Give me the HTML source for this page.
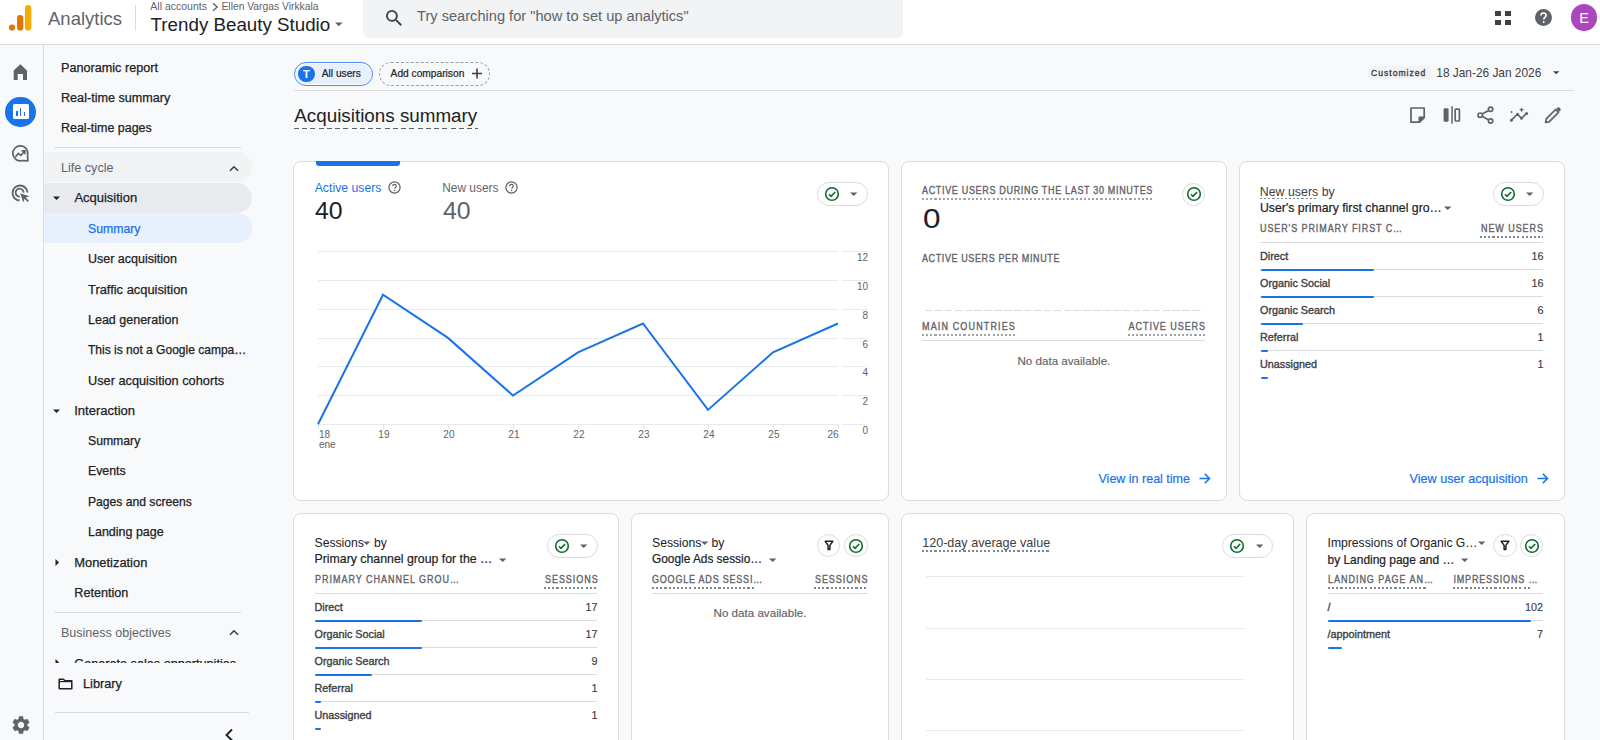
<!DOCTYPE html>
<html><head><meta charset="utf-8"><style>
html,body{margin:0;padding:0;width:1600px;height:740px;overflow:hidden;background:#f8f9fa}
body{position:relative;font-family:"Liberation Sans",sans-serif}
.t{position:absolute;white-space:nowrap;line-height:1}
svg{display:block}
</style></head><body>
<div style="position:absolute;left:0px;top:0px;width:1600px;height:740px;background:#f8f9fa"></div>
<div style="position:absolute;left:0px;top:0px;width:1600px;height:44px;background:#fff"></div>
<div style="position:absolute;left:0px;top:44px;width:1600px;height:1px;background:#dadce0"></div>
<div style="position:absolute;left:43px;top:45px;width:1px;height:695px;background:#dadce0"></div>
<svg style="position:absolute;left:8px;top:4px;" width="26" height="28" viewBox="0 0 26 28"><circle cx="4" cy="23.5" r="3.1" fill="#e37400"/><rect x="9" y="11" width="6.3" height="15.6" rx="3.15" fill="#e37400"/><rect x="17" y="1" width="6.3" height="25.6" rx="3.15" fill="#f9ab00"/></svg>
<div class="t" style="top:10.00px;font-size:18.5px;color:#5f6368;left:48.00px;">Analytics</div>
<div style="position:absolute;left:135px;top:5px;width:1px;height:26px;background:#dadce0"></div>
<div class="t" style="top:1.00px;font-size:10.5px;color:#5f6368;left:150.30px;">All accounts</div>
<svg style="position:absolute;left:211px;top:2px;" width="8" height="10" viewBox="0 0 8 10"><path d="M2 1.2 L6.2 5 L2 8.8" stroke="#5f6368" stroke-width="1.4" fill="none"/></svg>
<div class="t" style="top:2.00px;font-size:10.3px;color:#5f6368;left:221.50px;">Ellen Vargas Virkkala</div>
<div class="t" style="top:16.00px;font-size:18.76px;color:#202124;left:150.60px;">Trendy Beauty Studio</div>
<svg style="position:absolute;left:335px;top:22px;" width="8" height="5" viewBox="0 0 8 5"><path d="M0 0.5 L7.6 0.5 L3.8 4.3Z" fill="#5f6368"/></svg>
<div style="position:absolute;left:363px;top:-10px;width:540px;height:47.5px;background:#f1f3f4;border-radius:6px"></div>
<svg style="position:absolute;left:385.7px;top:10px;" width="16.8" height="16.8" viewBox="3 3 18.5 18.5"><path d="M15.5 14h-.79l-.28-.27A6.47 6.47 0 0 0 16 9.5 6.5 6.5 0 1 0 9.5 16c1.61 0 3.09-.59 4.23-1.57l.27.28v.79l5 4.99L20.49 19l-4.99-5zm-6 0C7.01 14 5 11.99 5 9.5S7.01 5 9.5 5 14 7.01 14 9.5 11.99 14 9.5 14z" fill="#3c4043"/></svg>
<div class="t" style="top:9.00px;font-size:14.63px;color:#5f6368;left:417.00px;">Try searching for "how to set up analytics"</div>
<div style="position:absolute;left:1495.2px;top:10.5px;width:5.6px;height:5.3px;background:#3c4043"></div>
<div style="position:absolute;left:1505px;top:10.5px;width:5.6px;height:5.3px;background:#3c4043"></div>
<div style="position:absolute;left:1495.2px;top:19.9px;width:5.6px;height:5.3px;background:#3c4043"></div>
<div style="position:absolute;left:1505px;top:19.9px;width:5.6px;height:5.3px;background:#3c4043"></div>
<svg style="position:absolute;left:1535px;top:9px;" width="17" height="17" viewBox="0 0 17 17"><circle cx="8.5" cy="8.5" r="8.5" fill="#5f6368"/><path d="M5.9 6.6a2.6 2.6 0 0 1 5.2 0c0 1.7-2.4 1.9-2.4 3.9" stroke="#fff" stroke-width="1.6" fill="none"/><circle cx="8.7" cy="13.1" r="1" fill="#fff"/></svg>
<div style="position:absolute;left:1570.7px;top:4.3px;width:26.6px;height:26.6px;background:#ab47bc;border-radius:50%"></div>
<div class="t" style="top:11.00px;font-size:14.5px;color:#fff;left:1384.00px;width:400px;text-align:center;">E</div>
<svg style="position:absolute;left:12px;top:63px;" width="17" height="18" viewBox="0 0 17 18"><path d="M1.7 16.9V7.6L8.3 1.3 15 7.6V16.9H11V11H5.7V16.9Z" fill="#5f6368"/></svg>
<div style="position:absolute;left:5.2px;top:96.9px;width:30.4px;height:30.4px;background:#1a73e8;border-radius:50%"></div>
<div style="position:absolute;left:13px;top:104.2px;width:15.7px;height:15.3px;background:#fff;border-radius:1.5px"></div>
<div style="position:absolute;left:16.3px;top:110.5px;width:1.6px;height:5.5px;background:#1a73e8"></div>
<div style="position:absolute;left:19.9px;top:107.8px;width:1.6px;height:8.2px;background:#1a73e8"></div>
<div style="position:absolute;left:23.5px;top:112.3px;width:1.6px;height:3.7px;background:#1a73e8"></div>
<svg style="position:absolute;left:11px;top:143.5px;" width="20" height="20" viewBox="0 0 20 20"><path d="M16.54 11.24A7.5 7.5 0 1 0 11.24 16.54L16.9 16.9Z" stroke="#5f6368" stroke-width="1.7" fill="none" stroke-linejoin="round"/><path d="M4.2 13.2 L7.3 9.4 L9.9 11.4 L13.6 7.2" stroke="#5f6368" stroke-width="1.6" fill="none"/><path d="M10.6 6.9h3.3v3.3" stroke="#5f6368" stroke-width="1.6" fill="none"/></svg>
<svg style="position:absolute;left:11px;top:184px;" width="19" height="19" viewBox="0 0 19 19"><path d="M16.5 8.5A7.5 7.5 0 1 0 8.5 16.5" stroke="#5f6368" stroke-width="1.8" fill="none"/><path d="M12.6 8.8A4 4 0 1 0 8.8 12.6" stroke="#5f6368" stroke-width="1.8" fill="none"/><path d="M9.2 9.2 L18.5 12.3 L14.7 13.6 L17.9 16.8 L16.8 17.9 L13.6 14.7 L12.3 18.5Z" fill="#5f6368"/></svg>
<svg style="position:absolute;left:11.5px;top:716px;" width="18" height="18" viewBox="2 2 20 20"><path d="M19.14 12.94c.04-.3.06-.61.06-.94 0-.32-.02-.64-.07-.94l2.03-1.58a.49.49 0 0 0 .12-.61l-1.92-3.32a.488.488 0 0 0-.59-.22l-2.39.96c-.5-.38-1.03-.7-1.62-.94l-.36-2.54a.484.484 0 0 0-.48-.41h-3.84c-.24 0-.43.17-.47.41l-.36 2.54c-.59.24-1.13.57-1.62.94l-2.39-.96c-.22-.08-.47 0-.59.22L2.74 8.87c-.12.21-.08.47.12.61l2.03 1.58c-.05.3-.09.63-.09.94s.02.64.07.94l-2.03 1.58a.49.49 0 0 0-.12.61l1.92 3.32c.12.22.37.29.59.22l2.39-.96c.5.38 1.03.7 1.62.94l.36 2.54c.05.24.24.41.48.41h3.84c.24 0 .44-.17.47-.41l.36-2.54c.59-.24 1.13-.56 1.62-.94l2.39.96c.22.08.47 0 .59-.22l1.92-3.32c.12-.22.07-.47-.12-.61l-2.01-1.58zM12 15.6c-1.98 0-3.6-1.62-3.6-3.6s1.62-3.6 3.6-3.6 3.6 1.62 3.6 3.6-1.62 3.6-3.6 3.6z" fill="#5f6368"/></svg>
<div class="t" style="top:62.00px;font-size:12.65px;color:#202124;-webkit-text-stroke:0.25px #202124;left:61.00px;">Panoramic report</div>
<div class="t" style="top:92.00px;font-size:12.61px;color:#202124;-webkit-text-stroke:0.25px #202124;left:61.00px;">Real-time summary</div>
<div class="t" style="top:122.00px;font-size:12.47px;color:#202124;-webkit-text-stroke:0.25px #202124;left:61.00px;">Real-time pages</div>
<div style="position:absolute;left:54px;top:147px;width:187px;height:1px;background:#dadce0"></div>
<div style="position:absolute;left:44px;top:152px;width:207.5px;height:30px;background:#f1f3f4;border-radius:0 15px 15px 0"></div>
<div class="t" style="top:162.00px;font-size:12.6px;color:#5f6368;left:61.00px;">Life cycle</div>
<svg style="position:absolute;left:228.8px;top:164.5px;" width="10" height="7" viewBox="0 0 10 7"><path d="M1 5.8 L5 1.8 L9 5.8" stroke="#3c4043" stroke-width="1.6" fill="none"/></svg>
<div style="position:absolute;left:44px;top:182.5px;width:207.5px;height:30.5px;background:#e8eaed;border-radius:0 15px 15px 0"></div>
<svg style="position:absolute;left:53px;top:195.5px;" width="8" height="5" viewBox="0 0 8 5"><path d="M0 0.5 L7 0.5 L3.5 4Z" fill="#202124"/></svg>
<div class="t" style="top:192.00px;font-size:12.97px;color:#202124;-webkit-text-stroke:0.25px #202124;left:74.40px;">Acquisition</div>
<div style="position:absolute;left:44px;top:213px;width:207.5px;height:30px;background:#e8f0fe;border-radius:0 15px 15px 0"></div>
<div class="t" style="top:223.00px;font-size:12.27px;color:#1a73e8;-webkit-text-stroke:0.25px #1a73e8;left:88.00px;">Summary</div>
<div class="t" style="top:253.00px;font-size:12.51px;color:#202124;-webkit-text-stroke:0.25px #202124;left:88.00px;">User acquisition</div>
<div class="t" style="top:284.00px;font-size:12.89px;color:#202124;-webkit-text-stroke:0.25px #202124;left:88.00px;">Traffic acquisition</div>
<div class="t" style="top:314.00px;font-size:12.51px;color:#202124;-webkit-text-stroke:0.25px #202124;left:88.00px;">Lead generation</div>
<div class="t" style="top:344.00px;font-size:12.03px;color:#202124;-webkit-text-stroke:0.25px #202124;left:88.00px;">This is not a Google campa…</div>
<div class="t" style="top:375.00px;font-size:12.75px;color:#202124;-webkit-text-stroke:0.25px #202124;left:88.00px;">User acquisition cohorts</div>
<svg style="position:absolute;left:53px;top:408.5px;" width="8" height="5" viewBox="0 0 8 5"><path d="M0 0.5 L7 0.5 L3.5 4Z" fill="#202124"/></svg>
<div class="t" style="top:404.00px;font-size:13.06px;color:#202124;-webkit-text-stroke:0.25px #202124;left:74.20px;">Interaction</div>
<div class="t" style="top:435.00px;font-size:12.22px;color:#202124;-webkit-text-stroke:0.25px #202124;left:88.00px;">Summary</div>
<div class="t" style="top:465.00px;font-size:12.3px;color:#202124;-webkit-text-stroke:0.25px #202124;left:88.00px;">Events</div>
<div class="t" style="top:496.00px;font-size:12.13px;color:#202124;-webkit-text-stroke:0.25px #202124;left:88.00px;">Pages and screens</div>
<div class="t" style="top:526.00px;font-size:12.49px;color:#202124;-webkit-text-stroke:0.25px #202124;left:88.00px;">Landing page</div>
<svg style="position:absolute;left:54.5px;top:559px;" width="5" height="8" viewBox="0 0 5 8"><path d="M0.5 0 L4 3.5 L0.5 7Z" fill="#202124"/></svg>
<div class="t" style="top:557.00px;font-size:12.88px;color:#202124;-webkit-text-stroke:0.25px #202124;left:74.30px;">Monetization</div>
<div class="t" style="top:587.00px;font-size:12.62px;color:#202124;-webkit-text-stroke:0.25px #202124;left:74.30px;">Retention</div>
<div style="position:absolute;left:54px;top:612px;width:187px;height:1px;background:#dadce0"></div>
<div class="t" style="top:627.00px;font-size:12.53px;color:#5f6368;left:61.00px;">Business objectives</div>
<svg style="position:absolute;left:229px;top:629px;" width="10" height="7" viewBox="0 0 10 7"><path d="M1 5.8 L5 1.8 L9 5.8" stroke="#3c4043" stroke-width="1.6" fill="none"/></svg>
<div style="position:absolute;left:0;top:0;width:260px;height:662.5px;overflow:hidden">
<svg style="position:absolute;left:54.5px;top:659px;" width="5" height="8" viewBox="0 0 5 8"><path d="M0.5 0 L4 3.5 L0.5 7Z" fill="#202124"/></svg>
<div class="t" style="top:658.00px;font-size:12.67px;color:#202124;-webkit-text-stroke:0.25px #202124;left:74.30px;">Generate sales opportunities</div>
</div>
<svg style="position:absolute;left:57.5px;top:678px;" width="15" height="12" viewBox="0 0 15 12"><path d="M1.2 1.2h4.3l1.4 1.5h6.9v8H1.2Z" stroke="#202124" stroke-width="1.5" fill="none" stroke-linejoin="round"/><path d="M1.2 3.6h12.6" stroke="#202124" stroke-width="1.2"/></svg>
<div class="t" style="top:678.00px;font-size:12.76px;color:#202124;-webkit-text-stroke:0.25px #202124;left:83.00px;">Library</div>
<div style="position:absolute;left:55px;top:712px;width:194px;height:1px;background:#dadce0"></div>
<svg style="position:absolute;left:224px;top:728px;" width="10" height="14" viewBox="0 0 10 14"><path d="M8 1.5 L2.5 7 L8 12.5" stroke="#202124" stroke-width="1.9" fill="none"/></svg>
<div style="position:absolute;left:294px;top:62px;width:78.5px;height:24px;box-sizing:border-box;background:#e8f0fe;border:1.6px solid #4a8af4;border-radius:12px;box-shadow:inset 0 0 0 1px #fff"></div>
<div style="position:absolute;left:298px;top:65.6px;width:16.8px;height:16.8px;background:#1a73e8;border-radius:50%"></div>
<div class="t" style="top:69.00px;font-size:11px;color:#fff;font-weight:700;left:106.40px;width:400px;text-align:center;">T</div>
<div class="t" style="top:69.00px;font-size:10.17px;color:#202124;-webkit-text-stroke:0.2px #202124;left:321.80px;">All users</div>
<div style="position:absolute;left:379px;top:62px;width:111px;height:24px;box-sizing:border-box;border:1px dashed #9aa0a6;border-radius:12px"></div>
<div class="t" style="top:69.00px;font-size:10.21px;color:#202124;-webkit-text-stroke:0.2px #202124;left:390.60px;">Add comparison</div>
<svg style="position:absolute;left:471px;top:67.5px;" width="12" height="11" viewBox="0 0 12 11"><path d="M6 0.5V10.5M1 5.5H11" stroke="#3c4043" stroke-width="1.6"/></svg>
<div style="position:absolute;left:294px;top:90px;width:1280px;height:1px;background:#dadce0"></div>
<div style="position:absolute;left:1368px;top:66.3px;width:62.8px;height:12.7px;background:#f1f3f4"></div>
<div class="t" style="top:68.00px;font-size:9.5px;color:#3c4043;letter-spacing:1.14px;-webkit-text-stroke:0.35px #3c4043;transform:scaleX(0.9);transform-origin:left center;left:1371.30px;">Customized</div>
<div class="t" style="top:68.00px;font-size:11.88px;color:#3c4043;left:1436.30px;">18 Jan-26 Jan 2026</div>
<svg style="position:absolute;left:1553px;top:71px;" width="7" height="4" viewBox="0 0 7 4"><path d="M0 0.2 L6.4 0.2 L3.2 3.2Z" fill="#3c4043"/></svg>
<div class="t" style="top:107.00px;font-size:18.82px;color:#202124;left:294.30px;">Acquisitions summary</div>
<div style="position:absolute;left:294px;top:127.8px;width:184px;height:1.5px;background:repeating-linear-gradient(90deg,#5f6368 0 5px,transparent 5px 8.25px)"></div>
<svg style="position:absolute;left:1409px;top:106px;" width="18" height="18" viewBox="0 0 18 18"><path d="M2 2h13.2v9.6l-4.6 4.6H2Z" stroke="#5f6368" stroke-width="1.7" fill="none" stroke-linejoin="round"/><path d="M15.2 11h-5.2v5.2Z" fill="#5f6368" stroke="#5f6368" stroke-width="1" stroke-linejoin="round"/></svg>
<svg style="position:absolute;left:1443px;top:106px;" width="18" height="18" viewBox="0 0 18 18"><rect x="0.6" y="2.2" width="5" height="13.6" rx="1.2" fill="#5f6368"/><rect x="8.3" y="0.3" width="1.5" height="17.4" fill="#5f6368"/><rect x="12.2" y="3.1" width="4.2" height="11.9" rx="0.8" stroke="#5f6368" stroke-width="1.7" fill="none"/></svg>
<svg style="position:absolute;left:1477px;top:106px;" width="18" height="18" viewBox="0 0 18 18"><circle cx="13.6" cy="3.3" r="2.2" stroke="#5f6368" stroke-width="1.7" fill="none"/><circle cx="3.2" cy="9.2" r="2.2" stroke="#5f6368" stroke-width="1.7" fill="none"/><circle cx="13.6" cy="15" r="2.2" stroke="#5f6368" stroke-width="1.7" fill="none"/><path d="M5.1 8.1 L11.7 4.4 M5.1 10.3 L11.7 13.9" stroke="#5f6368" stroke-width="1.7"/></svg>
<svg style="position:absolute;left:1510px;top:106px;" width="19" height="18" viewBox="0 0 19 18"><path d="M1.2 14.4 L7.5 8 L11.5 12.4 L16.6 7.4" stroke="#5f6368" stroke-width="1.6" fill="none" stroke-linejoin="round"/><circle cx="1.4" cy="14.3" r="1.5" fill="#5f6368"/><circle cx="7.5" cy="8" r="1.3" fill="#5f6368"/><circle cx="11.5" cy="12.4" r="1.3" fill="#5f6368"/><circle cx="16.6" cy="7.4" r="1.5" fill="#5f6368"/><path d="M11.6 1.2l.8 1.7 1.7.8-1.7.8-.8 1.7-.8-1.7-1.7-.8 1.7-.8Z" fill="#5f6368"/><path d="M1.6 4.6l.5 1 1 .5-1 .5-.5 1-.5-1-1-.5 1-.5Z" fill="#5f6368"/></svg>
<svg style="position:absolute;left:1544px;top:106px;" width="18" height="18" viewBox="0 0 18 18"><path d="M1.6 16.4 L2.2 12.9 L11.6 3.5 L14.5 6.4 L5.1 15.8Z" stroke="#5f6368" stroke-width="1.7" fill="none" stroke-linejoin="round"/><path d="M12.3 2.8 L13.5 1.6 A1.3 1.3 0 0 1 15.3 1.6 L16.4 2.7 A1.3 1.3 0 0 1 16.4 4.5 L15.2 5.7Z" fill="#5f6368"/></svg>
<div style="position:absolute;left:293px;top:161px;width:596px;height:340px;box-sizing:border-box;background:#fff;border:1px solid #dadce0;border-radius:8px"></div>
<div style="position:absolute;left:901px;top:161px;width:326px;height:340px;box-sizing:border-box;background:#fff;border:1px solid #dadce0;border-radius:8px"></div>
<div style="position:absolute;left:1239px;top:161px;width:326px;height:340px;box-sizing:border-box;background:#fff;border:1px solid #dadce0;border-radius:8px"></div>
<div style="position:absolute;left:293px;top:513px;width:326px;height:258px;box-sizing:border-box;background:#fff;border:1px solid #dadce0;border-radius:8px"></div>
<div style="position:absolute;left:631px;top:513px;width:258px;height:258px;box-sizing:border-box;background:#fff;border:1px solid #dadce0;border-radius:8px"></div>
<div style="position:absolute;left:901px;top:513px;width:393px;height:258px;box-sizing:border-box;background:#fff;border:1px solid #dadce0;border-radius:8px"></div>
<div style="position:absolute;left:1306px;top:513px;width:259px;height:258px;box-sizing:border-box;background:#fff;border:1px solid #dadce0;border-radius:8px"></div>
<div style="position:absolute;left:315.5px;top:161.4px;width:84px;height:4.3px;background:#1a73e8;border-radius:0 0 3px 3px"></div>
<div class="t" style="top:182.00px;font-size:12.27px;color:#1a73e8;left:314.70px;">Active users</div>
<svg style="position:absolute;left:387.5px;top:180.5px;" width="13" height="13" viewBox="0 0 13 13"><circle cx="6.5" cy="6.5" r="5.6" stroke="#5f6368" stroke-width="1.2" fill="none"/><path d="M4.7 5.2a1.8 1.8 0 0 1 3.6 0c0 1.2-1.6 1.3-1.6 2.6" stroke="#5f6368" stroke-width="1.2" fill="none"/><circle cx="6.6" cy="9.6" r="0.75" fill="#5f6368"/></svg>
<div class="t" style="top:183.00px;font-size:11.92px;color:#5f6368;left:442.20px;">New users</div>
<svg style="position:absolute;left:504.5px;top:180.5px;" width="13" height="13" viewBox="0 0 13 13"><circle cx="6.5" cy="6.5" r="5.6" stroke="#5f6368" stroke-width="1.2" fill="none"/><path d="M4.7 5.2a1.8 1.8 0 0 1 3.6 0c0 1.2-1.6 1.3-1.6 2.6" stroke="#5f6368" stroke-width="1.2" fill="none"/><circle cx="6.6" cy="9.6" r="0.75" fill="#5f6368"/></svg>
<div class="t" style="top:200.00px;font-size:23px;color:#202124;left:314.70px;transform:scaleX(1.08);transform-origin:left">40</div>
<div class="t" style="top:200.00px;font-size:23px;color:#5f6368;left:442.60px;transform:scaleX(1.08);transform-origin:left">40</div>
<div style="position:absolute;left:817px;top:182.0px;width:51px;height:24px;box-sizing:border-box;border:1px solid #dadce0;border-radius:12px;background:#fff"></div>
<svg style="position:absolute;left:823.8000000000001px;top:185.9px;" width="16" height="16" viewBox="0 0 16 16"><circle cx="8" cy="8" r="6.3" stroke="#0f6b2c" stroke-width="1.6" fill="none"/><path d="M4.9 8.2 L7 10.3 L11.2 6" stroke="#0f6b2c" stroke-width="1.6" fill="none"/></svg>
<svg style="position:absolute;left:850.2px;top:191.8px;" width="8" height="5" viewBox="0 0 8 5"><path d="M0 0.4 L7.4 0.4 L3.7 4Z" fill="#5f6368"/></svg>
<div style="position:absolute;left:318.4px;top:424.0px;width:520px;height:1px;background:#e8eaed"></div>
<div style="position:absolute;left:841.8px;top:424.0px;width:25.5px;height:1px;background:#e8eaed"></div>
<div class="t" style="top:426.00px;font-size:10px;color:#5f6368;right:732.00px;text-align:right;">0</div>
<div style="position:absolute;left:318.4px;top:395.0px;width:520px;height:1px;background:#e8eaed"></div>
<div style="position:absolute;left:841.8px;top:395.0px;width:25.5px;height:1px;background:#e8eaed"></div>
<div class="t" style="top:397.00px;font-size:10px;color:#5f6368;right:732.00px;text-align:right;">2</div>
<div style="position:absolute;left:318.4px;top:366.0px;width:520px;height:1px;background:#e8eaed"></div>
<div style="position:absolute;left:841.8px;top:366.0px;width:25.5px;height:1px;background:#e8eaed"></div>
<div class="t" style="top:368.00px;font-size:10px;color:#5f6368;right:732.00px;text-align:right;">4</div>
<div style="position:absolute;left:318.4px;top:337.5px;width:520px;height:1px;background:#e8eaed"></div>
<div style="position:absolute;left:841.8px;top:337.5px;width:25.5px;height:1px;background:#e8eaed"></div>
<div class="t" style="top:340.00px;font-size:10px;color:#5f6368;right:732.00px;text-align:right;">6</div>
<div style="position:absolute;left:318.4px;top:308.5px;width:520px;height:1px;background:#e8eaed"></div>
<div style="position:absolute;left:841.8px;top:308.5px;width:25.5px;height:1px;background:#e8eaed"></div>
<div class="t" style="top:311.00px;font-size:10px;color:#5f6368;right:732.00px;text-align:right;">8</div>
<div style="position:absolute;left:318.4px;top:280.0px;width:520px;height:1px;background:#e8eaed"></div>
<div style="position:absolute;left:841.8px;top:280.0px;width:25.5px;height:1px;background:#e8eaed"></div>
<div class="t" style="top:282.00px;font-size:10px;color:#5f6368;right:732.00px;text-align:right;">10</div>
<div style="position:absolute;left:318.4px;top:251.0px;width:520px;height:1px;background:#e8eaed"></div>
<div style="position:absolute;left:841.8px;top:251.0px;width:25.5px;height:1px;background:#e8eaed"></div>
<div class="t" style="top:253.00px;font-size:10px;color:#5f6368;right:732.00px;text-align:right;">12</div>
<div style="position:absolute;left:317.9px;top:424px;width:1px;height:4.6px;background:#e3e5e8"></div>
<div class="t" style="top:430.00px;font-size:10px;color:#5f6368;left:318.90px;">18</div>
<div style="position:absolute;left:382.9px;top:424px;width:1px;height:4.6px;background:#e3e5e8"></div>
<div class="t" style="top:430.00px;font-size:10px;color:#5f6368;left:183.90px;width:400px;text-align:center;">19</div>
<div style="position:absolute;left:447.9px;top:424px;width:1px;height:4.6px;background:#e3e5e8"></div>
<div class="t" style="top:430.00px;font-size:10px;color:#5f6368;left:248.90px;width:400px;text-align:center;">20</div>
<div style="position:absolute;left:512.9px;top:424px;width:1px;height:4.6px;background:#e3e5e8"></div>
<div class="t" style="top:430.00px;font-size:10px;color:#5f6368;left:313.90px;width:400px;text-align:center;">21</div>
<div style="position:absolute;left:577.9px;top:424px;width:1px;height:4.6px;background:#e3e5e8"></div>
<div class="t" style="top:430.00px;font-size:10px;color:#5f6368;left:378.90px;width:400px;text-align:center;">22</div>
<div style="position:absolute;left:642.9px;top:424px;width:1px;height:4.6px;background:#e3e5e8"></div>
<div class="t" style="top:430.00px;font-size:10px;color:#5f6368;left:443.90px;width:400px;text-align:center;">23</div>
<div style="position:absolute;left:707.9px;top:424px;width:1px;height:4.6px;background:#e3e5e8"></div>
<div class="t" style="top:430.00px;font-size:10px;color:#5f6368;left:508.90px;width:400px;text-align:center;">24</div>
<div style="position:absolute;left:772.9px;top:424px;width:1px;height:4.6px;background:#e3e5e8"></div>
<div class="t" style="top:430.00px;font-size:10px;color:#5f6368;left:573.90px;width:400px;text-align:center;">25</div>
<div style="position:absolute;left:837.9px;top:424px;width:1px;height:4.6px;background:#e3e5e8"></div>
<div class="t" style="top:430.00px;font-size:10px;color:#5f6368;right:761.40px;text-align:right;">26</div>
<div class="t" style="top:440.00px;font-size:10px;color:#5f6368;left:318.90px;">ene</div>
<svg style="position:absolute;left:318.4px;top:240px;overflow:visible" width="521" height="200" viewBox="0 0 521 200"><polyline points="0.0,184.30 65.0,54.70 130.0,97.90 195.0,155.50 260.0,112.30 325.0,83.50 390.0,169.90 455.0,112.30 520.0,83.50" stroke="#1a73e8" stroke-width="2" fill="none" stroke-linejoin="miter"/></svg>
<div class="t" style="top:186.00px;font-size:10px;color:#5f6368;letter-spacing:0.749px;-webkit-text-stroke:0.35px #5f6368;transform:scaleX(0.9);transform-origin:left center;left:922.00px;">ACTIVE USERS DURING THE LAST 30 MINUTES</div>
<div style="position:absolute;left:922px;top:198px;width:231px;height:2px;background:repeating-linear-gradient(90deg,#a0a4a8 0 2.1px,transparent 2.1px 4.15px)"></div>
<div style="position:absolute;left:1182px;top:182.5px;width:23.3px;height:23.3px;box-sizing:border-box;border:1px solid #dadce0;border-radius:50%;background:#fff"></div>
<svg style="position:absolute;left:1185.65px;top:186.15px;" width="16" height="16" viewBox="0 0 16 16"><circle cx="8" cy="8" r="6.3" stroke="#0f6b2c" stroke-width="1.6" fill="none"/><path d="M4.9 8.2 L7 10.3 L11.2 6" stroke="#0f6b2c" stroke-width="1.6" fill="none"/></svg>
<div class="t" style="top:205.00px;font-size:27.4px;color:#202124;left:923.00px;transform:scaleX(1.15);transform-origin:left">0</div>
<div class="t" style="top:254.00px;font-size:10px;color:#5f6368;letter-spacing:0.675px;-webkit-text-stroke:0.35px #5f6368;transform:scaleX(0.9);transform-origin:left center;left:922.00px;">ACTIVE USERS PER MINUTE</div>
<div style="position:absolute;left:925px;top:310px;width:278px;height:1px;background:repeating-linear-gradient(90deg,#dadce0 0 7.5px,transparent 7.5px 9.9px)"></div>
<div class="t" style="top:322.00px;font-size:10px;color:#5f6368;letter-spacing:1.27px;-webkit-text-stroke:0.35px #5f6368;transform:scaleX(0.9);transform-origin:left center;left:922.00px;">MAIN COUNTRIES</div>
<div style="position:absolute;left:922px;top:334px;width:94px;height:2px;background:repeating-linear-gradient(90deg,#a0a4a8 0 2.1px,transparent 2.1px 4.15px)"></div>
<div class="t" style="top:322.00px;font-size:10px;color:#5f6368;letter-spacing:1.054px;-webkit-text-stroke:0.35px #5f6368;transform:scaleX(0.9);transform-origin:right center;right:393.65px;text-align:right;">ACTIVE USERS</div>
<div style="position:absolute;left:1128px;top:334px;width:77px;height:2px;background:repeating-linear-gradient(90deg,#a0a4a8 0 2.1px,transparent 2.1px 4.15px)"></div>
<div style="position:absolute;left:922px;top:340px;width:283.4px;height:1px;background:#dadce0"></div>
<div class="t" style="top:355.00px;font-size:11.62px;color:#5f6368;-webkit-text-stroke:0.15px #5f6368;left:863.90px;width:400px;text-align:center;">No data available.</div>
<div class="t" style="top:473.00px;font-size:12.5px;color:#1a73e8;-webkit-text-stroke:0.2px #1a73e8;left:1098.50px;">View in real time</div>
<svg style="position:absolute;left:1199px;top:473px;" width="12" height="11" viewBox="0 0 12 11"><path d="M0.5 5.5H10.5M5.8 0.8L10.5 5.5L5.8 10.2" stroke="#1a73e8" stroke-width="1.6" fill="none"/></svg>
<div class="t" style="top:186.00px;font-size:12.38px;color:#3c4043;left:1259.80px;">New users by</div>
<div style="position:absolute;left:1260px;top:197.8px;width:58px;height:1.5px;background:repeating-linear-gradient(90deg,#80868b 0 2.1px,transparent 2.1px 4.15px)"></div>
<div class="t" style="top:202.00px;font-size:12.29px;color:#202124;-webkit-text-stroke:0.2px #202124;left:1260.00px;">User&#39;s primary first channel gro…</div>
<svg style="position:absolute;left:1444px;top:206px;" width="8" height="5" viewBox="0 0 8 5"><path d="M0 0.4 L7.4 0.4 L3.7 4Z" fill="#5f6368"/></svg>
<div style="position:absolute;left:1493px;top:182.0px;width:51px;height:24px;box-sizing:border-box;border:1px solid #dadce0;border-radius:12px;background:#fff"></div>
<svg style="position:absolute;left:1499.6px;top:186.4px;" width="16" height="16" viewBox="0 0 16 16"><circle cx="8" cy="8" r="6.3" stroke="#0f6b2c" stroke-width="1.6" fill="none"/><path d="M4.9 8.2 L7 10.3 L11.2 6" stroke="#0f6b2c" stroke-width="1.6" fill="none"/></svg>
<svg style="position:absolute;left:1526px;top:192.3px;" width="8" height="5" viewBox="0 0 8 5"><path d="M0 0.4 L7.4 0.4 L3.7 4Z" fill="#5f6368"/></svg>
<div class="t" style="top:224.00px;font-size:10px;color:#5f6368;letter-spacing:1.003px;-webkit-text-stroke:0.35px #5f6368;transform:scaleX(0.9);transform-origin:left center;left:1260.00px;">USER&#39;S PRIMARY FIRST C…</div>
<div class="t" style="top:224.00px;font-size:10px;color:#5f6368;letter-spacing:1.036px;-webkit-text-stroke:0.35px #5f6368;transform:scaleX(0.9);transform-origin:right center;right:55.67px;text-align:right;">NEW USERS</div>
<div style="position:absolute;left:1480px;top:236.1px;width:63px;height:1.5px;background:repeating-linear-gradient(90deg,#80868b 0 2.1px,transparent 2.1px 4.15px)"></div>
<div style="position:absolute;left:1260px;top:241.6px;width:283.4000000000001px;height:1px;background:#dadce0"></div>
<div class="t" style="top:251.00px;font-size:10.8px;color:#3c4043;-webkit-text-stroke:0.35px #3c4043;left:1260.00px;">Direct</div>
<div class="t" style="top:251.00px;font-size:10.8px;color:#3c4043;-webkit-text-stroke:0.15px #3c4043;right:56.60px;text-align:right;">16</div>
<div style="position:absolute;left:1260px;top:269.0px;width:283.4000000000001px;height:1px;background:#dadce0"></div>
<div style="position:absolute;left:1260.5px;top:268.7px;width:113.2px;height:2px;background:#1a73e8;border-radius:1px"></div>
<div class="t" style="top:278.00px;font-size:10.8px;color:#3c4043;-webkit-text-stroke:0.35px #3c4043;left:1260.00px;">Organic Social</div>
<div class="t" style="top:278.00px;font-size:10.8px;color:#3c4043;-webkit-text-stroke:0.15px #3c4043;right:56.60px;text-align:right;">16</div>
<div style="position:absolute;left:1260px;top:296.0px;width:283.4000000000001px;height:1px;background:#dadce0"></div>
<div style="position:absolute;left:1260.5px;top:295.7px;width:113.2px;height:2px;background:#1a73e8;border-radius:1px"></div>
<div class="t" style="top:305.00px;font-size:10.8px;color:#3c4043;-webkit-text-stroke:0.35px #3c4043;left:1260.00px;">Organic Search</div>
<div class="t" style="top:305.00px;font-size:10.8px;color:#3c4043;-webkit-text-stroke:0.15px #3c4043;right:56.60px;text-align:right;">6</div>
<div style="position:absolute;left:1260px;top:323.0px;width:283.4000000000001px;height:1px;background:#dadce0"></div>
<div style="position:absolute;left:1260.5px;top:322.7px;width:42.45px;height:2px;background:#1a73e8;border-radius:1px"></div>
<div class="t" style="top:332.00px;font-size:10.8px;color:#3c4043;-webkit-text-stroke:0.35px #3c4043;left:1260.00px;">Referral</div>
<div class="t" style="top:332.00px;font-size:10.8px;color:#3c4043;-webkit-text-stroke:0.15px #3c4043;right:56.60px;text-align:right;">1</div>
<div style="position:absolute;left:1260px;top:350.0px;width:283.4000000000001px;height:1px;background:#dadce0"></div>
<div style="position:absolute;left:1260.5px;top:349.7px;width:7.075px;height:2px;background:#1a73e8;border-radius:1px"></div>
<div class="t" style="top:359.00px;font-size:10.8px;color:#3c4043;-webkit-text-stroke:0.35px #3c4043;left:1260.00px;">Unassigned</div>
<div class="t" style="top:359.00px;font-size:10.8px;color:#3c4043;-webkit-text-stroke:0.15px #3c4043;right:56.60px;text-align:right;">1</div>
<div style="position:absolute;left:1260.5px;top:376.7px;width:7.075px;height:2px;background:#1a73e8;border-radius:1px"></div>
<div class="t" style="top:473.00px;font-size:12.64px;color:#1a73e8;-webkit-text-stroke:0.2px #1a73e8;left:1409.50px;">View user acquisition</div>
<svg style="position:absolute;left:1536.5px;top:473px;" width="12" height="11" viewBox="0 0 12 11"><path d="M0.5 5.5H10.5M5.8 0.8L10.5 5.5L5.8 10.2" stroke="#1a73e8" stroke-width="1.6" fill="none"/></svg>
<div class="t" style="top:537.00px;font-size:12.2px;color:#202124;left:314.50px;">Sessions</div>
<svg style="position:absolute;left:363.0px;top:541.1px;" width="8" height="5" viewBox="0 0 8 5"><path d="M0 0.4 L7.4 0.4 L3.7 4Z" fill="#5f6368"/></svg>
<div class="t" style="top:537.00px;font-size:12.2px;color:#202124;left:374.00px;">by</div>
<div class="t" style="top:553.00px;font-size:12.32px;color:#202124;-webkit-text-stroke:0.2px #202124;left:314.50px;">Primary channel group for the …</div>
<svg style="position:absolute;left:498.6px;top:558.0px;" width="8" height="5" viewBox="0 0 8 5"><path d="M0 0.4 L7.4 0.4 L3.7 4Z" fill="#5f6368"/></svg>
<div style="position:absolute;left:547px;top:534.0px;width:51px;height:24px;box-sizing:border-box;border:1px solid #dadce0;border-radius:12px;background:#fff"></div>
<svg style="position:absolute;left:553.6px;top:537.6px;" width="16" height="16" viewBox="0 0 16 16"><circle cx="8" cy="8" r="6.3" stroke="#0f6b2c" stroke-width="1.6" fill="none"/><path d="M4.9 8.2 L7 10.3 L11.2 6" stroke="#0f6b2c" stroke-width="1.6" fill="none"/></svg>
<svg style="position:absolute;left:580px;top:543.5px;" width="8" height="5" viewBox="0 0 8 5"><path d="M0 0.4 L7.4 0.4 L3.7 4Z" fill="#5f6368"/></svg>
<div class="t" style="top:575.00px;font-size:10px;color:#5f6368;letter-spacing:1.092px;-webkit-text-stroke:0.35px #5f6368;transform:scaleX(0.9);transform-origin:left center;left:314.50px;">PRIMARY CHANNEL GROU…</div>
<div class="t" style="top:575.00px;font-size:10px;color:#5f6368;letter-spacing:1.067px;-webkit-text-stroke:0.35px #5f6368;transform:scaleX(0.9);transform-origin:right center;right:1001.64px;text-align:right;">SESSIONS</div>
<div style="position:absolute;left:544px;top:587.3px;width:54px;height:1.5px;background:repeating-linear-gradient(90deg,#80868b 0 2.1px,transparent 2.1px 4.15px)"></div>
<div style="position:absolute;left:314.5px;top:592.8px;width:282.9px;height:1px;background:#dadce0"></div>
<div class="t" style="top:602.00px;font-size:10.8px;color:#3c4043;-webkit-text-stroke:0.35px #3c4043;left:314.50px;">Direct</div>
<div class="t" style="top:602.00px;font-size:10.8px;color:#3c4043;-webkit-text-stroke:0.15px #3c4043;right:1002.60px;text-align:right;">17</div>
<div style="position:absolute;left:314.5px;top:620.1999999999999px;width:282.9px;height:1px;background:#dadce0"></div>
<div style="position:absolute;left:315.0px;top:619.9px;width:107.28888888888889px;height:2px;background:#1a73e8;border-radius:1px"></div>
<div class="t" style="top:629.00px;font-size:10.8px;color:#3c4043;-webkit-text-stroke:0.35px #3c4043;left:314.50px;">Organic Social</div>
<div class="t" style="top:629.00px;font-size:10.8px;color:#3c4043;-webkit-text-stroke:0.15px #3c4043;right:1002.60px;text-align:right;">17</div>
<div style="position:absolute;left:314.5px;top:647.1999999999999px;width:282.9px;height:1px;background:#dadce0"></div>
<div style="position:absolute;left:315.0px;top:646.9px;width:107.28888888888889px;height:2px;background:#1a73e8;border-radius:1px"></div>
<div class="t" style="top:656.00px;font-size:10.8px;color:#3c4043;-webkit-text-stroke:0.35px #3c4043;left:314.50px;">Organic Search</div>
<div class="t" style="top:656.00px;font-size:10.8px;color:#3c4043;-webkit-text-stroke:0.15px #3c4043;right:1002.60px;text-align:right;">9</div>
<div style="position:absolute;left:314.5px;top:674.1999999999999px;width:282.9px;height:1px;background:#dadce0"></div>
<div style="position:absolute;left:315.0px;top:673.9px;width:56.8px;height:2px;background:#1a73e8;border-radius:1px"></div>
<div class="t" style="top:683.00px;font-size:10.8px;color:#3c4043;-webkit-text-stroke:0.35px #3c4043;left:314.50px;">Referral</div>
<div class="t" style="top:683.00px;font-size:10.8px;color:#3c4043;-webkit-text-stroke:0.15px #3c4043;right:1002.60px;text-align:right;">1</div>
<div style="position:absolute;left:314.5px;top:701.1999999999999px;width:282.9px;height:1px;background:#dadce0"></div>
<div style="position:absolute;left:315.0px;top:700.9px;width:6.311111111111111px;height:2px;background:#1a73e8;border-radius:1px"></div>
<div class="t" style="top:710.00px;font-size:10.8px;color:#3c4043;-webkit-text-stroke:0.35px #3c4043;left:314.50px;">Unassigned</div>
<div class="t" style="top:710.00px;font-size:10.8px;color:#3c4043;-webkit-text-stroke:0.15px #3c4043;right:1002.60px;text-align:right;">1</div>
<div style="position:absolute;left:315.0px;top:727.9px;width:6.311111111111111px;height:2px;background:#1a73e8;border-radius:1px"></div>
<div class="t" style="top:537.00px;font-size:12.2px;color:#202124;left:652.00px;">Sessions</div>
<svg style="position:absolute;left:700.5px;top:541.1px;" width="8" height="5" viewBox="0 0 8 5"><path d="M0 0.4 L7.4 0.4 L3.7 4Z" fill="#5f6368"/></svg>
<div class="t" style="top:537.00px;font-size:12.2px;color:#202124;left:711.50px;">by</div>
<div class="t" style="top:554.00px;font-size:11.87px;color:#202124;-webkit-text-stroke:0.2px #202124;left:652.00px;">Google Ads sessio…</div>
<svg style="position:absolute;left:769px;top:558.0px;" width="8" height="5" viewBox="0 0 8 5"><path d="M0 0.4 L7.4 0.4 L3.7 4Z" fill="#5f6368"/></svg>
<div style="position:absolute;left:817px;top:534px;width:23.3px;height:23.3px;box-sizing:border-box;border:1px solid #dadce0;border-radius:50%;background:#fff"></div>
<svg style="position:absolute;left:823.6px;top:540.3px;" width="10" height="11" viewBox="0 0 10 11"><path d="M1.2 1.3 H8.8 L5.9 5.4 V9.6 H4.1 V5.4Z" stroke="#202124" stroke-width="1.5" fill="none" stroke-linejoin="round"/></svg>
<div style="position:absolute;left:844.3px;top:534px;width:23.3px;height:23.3px;box-sizing:border-box;border:1px solid #dadce0;border-radius:50%;background:#fff"></div>
<svg style="position:absolute;left:847.9499999999999px;top:537.65px;" width="16" height="16" viewBox="0 0 16 16"><circle cx="8" cy="8" r="6.3" stroke="#0f6b2c" stroke-width="1.6" fill="none"/><path d="M4.9 8.2 L7 10.3 L11.2 6" stroke="#0f6b2c" stroke-width="1.6" fill="none"/></svg>
<div class="t" style="top:575.00px;font-size:10px;color:#5f6368;letter-spacing:0.88px;-webkit-text-stroke:0.35px #5f6368;transform:scaleX(0.9);transform-origin:left center;left:652.00px;">GOOGLE ADS SESSI…</div>
<div style="position:absolute;left:652px;top:587.3px;width:104px;height:1.5px;background:repeating-linear-gradient(90deg,#80868b 0 2.1px,transparent 2.1px 4.15px)"></div>
<div class="t" style="top:575.00px;font-size:10px;color:#5f6368;letter-spacing:1.039px;-webkit-text-stroke:0.35px #5f6368;transform:scaleX(0.9);transform-origin:right center;right:731.56px;text-align:right;">SESSIONS</div>
<div style="position:absolute;left:814px;top:587.3px;width:54px;height:1.5px;background:repeating-linear-gradient(90deg,#80868b 0 2.1px,transparent 2.1px 4.15px)"></div>
<div style="position:absolute;left:652px;top:592.8px;width:216px;height:1px;background:#dadce0"></div>
<div class="t" style="top:607.00px;font-size:11.62px;color:#5f6368;-webkit-text-stroke:0.15px #5f6368;left:560.00px;width:400px;text-align:center;">No data available.</div>
<div class="t" style="top:537.00px;font-size:12.58px;color:#3c4043;left:922.20px;">120-day average value</div>
<div style="position:absolute;left:922px;top:550px;width:128px;height:1.5px;background:repeating-linear-gradient(90deg,#80868b 0 2.1px,transparent 2.1px 4.15px)"></div>
<div style="position:absolute;left:1222px;top:534.0px;width:51px;height:24px;box-sizing:border-box;border:1px solid #dadce0;border-radius:12px;background:#fff"></div>
<svg style="position:absolute;left:1229.1px;top:538.1999999999999px;" width="16" height="16" viewBox="0 0 16 16"><circle cx="8" cy="8" r="6.3" stroke="#0f6b2c" stroke-width="1.6" fill="none"/><path d="M4.9 8.2 L7 10.3 L11.2 6" stroke="#0f6b2c" stroke-width="1.6" fill="none"/></svg>
<svg style="position:absolute;left:1255.5px;top:544.0999999999999px;" width="8" height="5" viewBox="0 0 8 5"><path d="M0 0.4 L7.4 0.4 L3.7 4Z" fill="#5f6368"/></svg>
<div style="position:absolute;left:925.8px;top:575.5px;width:318px;height:1px;background:#e8eaed"></div>
<div style="position:absolute;left:925.8px;top:627.5px;width:318px;height:1px;background:#e8eaed"></div>
<div style="position:absolute;left:925.8px;top:678.5px;width:318px;height:1px;background:#e8eaed"></div>
<div style="position:absolute;left:925.8px;top:729.5px;width:318px;height:1px;background:#e8eaed"></div>
<div class="t" style="top:537.00px;font-size:12.16px;color:#202124;left:1327.50px;">Impressions of Organic G…</div>
<svg style="position:absolute;left:1478px;top:541px;" width="8" height="5" viewBox="0 0 8 5"><path d="M0 0.4 L7.4 0.4 L3.7 4Z" fill="#5f6368"/></svg>
<div class="t" style="top:555.00px;font-size:11.96px;color:#202124;-webkit-text-stroke:0.2px #202124;left:1327.50px;">by Landing page and …</div>
<svg style="position:absolute;left:1461px;top:558px;" width="8" height="5" viewBox="0 0 8 5"><path d="M0 0.4 L7.4 0.4 L3.7 4Z" fill="#5f6368"/></svg>
<div style="position:absolute;left:1493.3px;top:534px;width:23.3px;height:23.3px;box-sizing:border-box;border:1px solid #dadce0;border-radius:50%;background:#fff"></div>
<svg style="position:absolute;left:1499.8999999999999px;top:540.3px;" width="10" height="11" viewBox="0 0 10 11"><path d="M1.2 1.3 H8.8 L5.9 5.4 V9.6 H4.1 V5.4Z" stroke="#202124" stroke-width="1.5" fill="none" stroke-linejoin="round"/></svg>
<div style="position:absolute;left:1520px;top:534px;width:23.3px;height:23.3px;box-sizing:border-box;border:1px solid #dadce0;border-radius:50%;background:#fff"></div>
<svg style="position:absolute;left:1523.65px;top:537.65px;" width="16" height="16" viewBox="0 0 16 16"><circle cx="8" cy="8" r="6.3" stroke="#0f6b2c" stroke-width="1.6" fill="none"/><path d="M4.9 8.2 L7 10.3 L11.2 6" stroke="#0f6b2c" stroke-width="1.6" fill="none"/></svg>
<div class="t" style="top:575.00px;font-size:10px;color:#5f6368;letter-spacing:1.086px;-webkit-text-stroke:0.35px #5f6368;transform:scaleX(0.9);transform-origin:left center;left:1327.50px;">LANDING PAGE AN…</div>
<div style="position:absolute;left:1328px;top:587.3px;width:98px;height:1.5px;background:repeating-linear-gradient(90deg,#80868b 0 2.1px,transparent 2.1px 4.15px)"></div>
<div class="t" style="top:575.00px;font-size:10px;color:#5f6368;letter-spacing:0.922px;-webkit-text-stroke:0.35px #5f6368;transform:scaleX(0.9);transform-origin:right center;right:61.37px;text-align:right;">IMPRESSIONS …</div>
<div style="position:absolute;left:1453px;top:587.3px;width:78px;height:1.5px;background:repeating-linear-gradient(90deg,#80868b 0 2.1px,transparent 2.1px 4.15px)"></div>
<div style="position:absolute;left:1327.5px;top:592.8px;width:215.5px;height:1px;background:#dadce0"></div>
<div class="t" style="top:602.00px;font-size:10.8px;color:#3c4043;-webkit-text-stroke:0.35px #3c4043;left:1327.50px;">/</div>
<div class="t" style="top:602.00px;font-size:10.8px;color:#3c4043;-webkit-text-stroke:0.15px #3c4043;right:57.00px;text-align:right;">102</div>
<div style="position:absolute;left:1327.5px;top:620.1999999999999px;width:215.5px;height:1px;background:#dadce0"></div>
<div style="position:absolute;left:1328px;top:619.9px;width:203.0px;height:2px;background:#1a73e8;border-radius:1px"></div>
<div class="t" style="top:629.00px;font-size:10.8px;color:#3c4043;-webkit-text-stroke:0.35px #3c4043;left:1327.50px;">/appointment</div>
<div class="t" style="top:629.00px;font-size:10.8px;color:#3c4043;-webkit-text-stroke:0.15px #3c4043;right:57.00px;text-align:right;">7</div>
<div style="position:absolute;left:1328px;top:646.9px;width:13.931372549019608px;height:2px;background:#1a73e8;border-radius:1px"></div>
</body></html>
